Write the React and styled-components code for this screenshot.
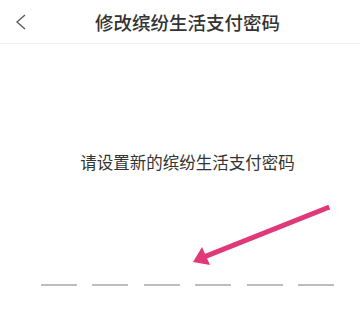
import React from 'react';
import styled, { createGlobalStyle } from 'styled-components';

const GlobalStyle = createGlobalStyle`
  html, body {
    margin: 0;
    padding: 0;
    background: #ffffff;
  }
  body {
    font-family: "Noto Sans CJK SC", "Noto Sans", sans-serif;
  }
`;

const Page = styled.div`
  position: relative;
  width: 360px;
  height: 336px;
  background: #ffffff;
  overflow: hidden;
`;

const Header = styled.header`
  display: grid;
  grid-template-columns: 40px 1fr 25px;
  align-items: center;
  height: 43px;
  border-bottom: 1px solid #f1f1f1;
`;

const BackButton = styled.button`
  display: flex;
  align-items: center;
  justify-content: flex-start;
  padding: 0 0 0 15px;
  height: 100%;
  border: none;
  background: none;
  cursor: pointer;
`;

const Title = styled.h1`
  margin: 0;
  text-align: center;
  font-size: 18.5px;
  font-weight: 500;
  color: #333333;
  line-height: 24px;
`;

const Content = styled.main`
  display: flex;
  flex-direction: column;
  align-items: center;
  padding: 108px 0 0 15px;
`;

const Prompt = styled.p`
  margin: 0;
  font-size: 16.5px;
  line-height: 20px;
  color: #333333;
`;

const Slots = styled.div`
  display: flex;
  justify-content: space-between;
  width: 294px;
  margin-top: 112px;
`;

const Slot = styled.span`
  display: block;
  width: 36px;
  height: 2px;
  background: #bdbdbd;
`;

const Arrow = styled.svg`
  position: absolute;
  left: 0;
  top: 0;
  pointer-events: none;
`;

export default function App() {
  return (
    <>
      <GlobalStyle />
      <Page>
        <Header>
          <BackButton aria-label="返回">
            <svg width="11" height="16" viewBox="0 0 11 16">
              <path d="M10 1 L2 8 L10 15" fill="none" stroke="#555" strokeWidth="1.3" />
            </svg>
          </BackButton>
          <Title>修改缤纷生活支付密码</Title>
          <span />
        </Header>
        <Content>
          <Prompt>请设置新的缤纷生活支付密码</Prompt>
          <Slots>
            {Array.from({ length: 6 }).map((_, i) => (
              <Slot key={i} />
            ))}
          </Slots>
        </Content>
        <Arrow width="360" height="336" viewBox="0 0 360 336">
          <line x1="327" y1="208" x2="204" y2="257" stroke="#e0397a" strokeWidth="5" strokeLinecap="square" />
          <polygon points="193,262 202,247 210,265" fill="#e0397a" />
        </Arrow>
      </Page>
    </>
  );
}
